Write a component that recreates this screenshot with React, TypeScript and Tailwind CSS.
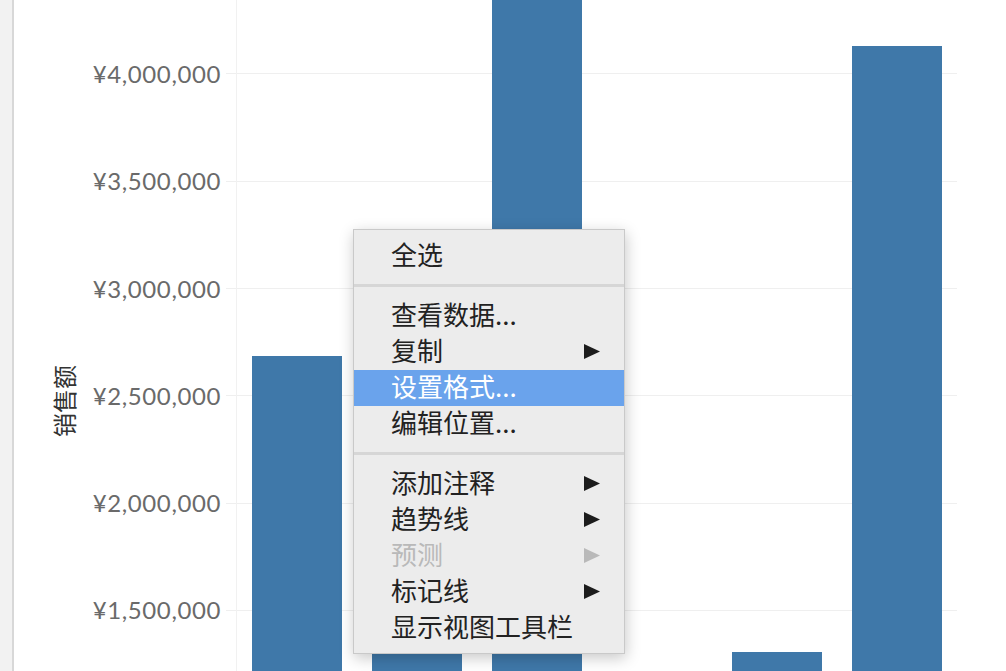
import type { CSSProperties } from 'react'

const axisTicks = ['¥4,000,000', '¥3,500,000', '¥3,000,000', '¥2,500,000', '¥2,000,000', '¥1,500,000']

// offsets (px) of each bar's top edge from the top of the pane; null = no mark
const barTops: (number | null)[] = [356, 520, -40, null, 652, 46]

type MenuItem =
  | { kind: 'sep' }
  | { kind: 'item'; label: string; submenu?: boolean; disabled?: boolean; active?: boolean }

const menu: MenuItem[] = [
  { kind: 'item', label: '全选' },
  { kind: 'sep' },
  { kind: 'item', label: '查看数据...' },
  { kind: 'item', label: '复制', submenu: true },
  { kind: 'item', label: '设置格式...', active: true },
  { kind: 'item', label: '编辑位置...' },
  { kind: 'sep' },
  { kind: 'item', label: '添加注释', submenu: true },
  { kind: 'item', label: '趋势线', submenu: true },
  { kind: 'item', label: '预测', submenu: true, disabled: true },
  { kind: 'item', label: '标记线', submenu: true },
  { kind: 'item', label: '显示视图工具栏' },
]

const cjk: CSSProperties = {
  fontFamily: '"Noto Sans CJK SC", "Noto Sans", sans-serif',
}

function SubmenuArrow({ color }: { color: string }) {
  return (
    <svg width="16" height="15" viewBox="0 0 16 15" className="mt-[4px] shrink-0">
      <path d="M0 0 L16 7.5 L0 15 Z" fill={color} />
    </svg>
  )
}

function ContextMenu() {
  return (
    <div
      className="absolute left-[353px] top-[229px] w-[272px] border border-[#c9c9c9] bg-[#ececec] pt-[8px] pb-[7px] shadow-[1px_4px_14px_rgba(0,0,0,0.22)]"
      style={cjk}
    >
      {menu.map((m, i) =>
        m.kind === 'sep' ? (
          <div key={i} className="mt-[10px] mb-[11px] h-[3px] bg-[#d6d6d6]" />
        ) : (
          <div
            key={i}
            className={
              'flex h-[36px] items-center justify-between pb-[5px] pl-[37px] pr-[24px] text-[26px] leading-[31px] ' +
              (m.active ? 'bg-[#6aa3ec] text-white' : m.disabled ? 'text-[#b9b9b9]' : 'text-[#222]')
            }
          >
            <span>{m.label}</span>
            {m.submenu && <SubmenuArrow color={m.disabled ? '#b9b9b9' : '#1c1c1c'} />}
          </div>
        )
      )}
    </div>
  )
}

export default function App() {
  return (
    <div className="relative flex h-[671px] w-[1006px] overflow-hidden bg-white">
      {/* side gutter */}
      <div className="w-[14px] shrink-0 border-r-2 border-[#d8d8d8] bg-[#f2f2f2]" />

      {/* axis title */}
      <div className="flex w-[72px] shrink-0 flex-col pl-[28px] pt-[365px]">
        <div className="flex h-[72px] items-center justify-center">
          <span
            className="-rotate-90 whitespace-nowrap text-[24px] leading-none text-[#333]"
            style={cjk}
          >
            销售额
          </span>
        </div>
      </div>

      {/* tick labels */}
      <div className="flex w-[150px] shrink-0 flex-col pt-[20.35px]">
        {axisTicks.map((t) => (
          <div key={t} className="flex h-[107.3px] items-center justify-end">
            <span
              className="text-[24px] leading-none tracking-[0.6px] text-[#6a6a6a]"
              style={{ fontFamily: 'Lato, "Open Sans", sans-serif' }}
            >
              {t}
            </span>
            <span className="ml-[5px] h-px w-[10px] bg-[#efefef]" />
          </div>
        ))}
      </div>

      {/* plot area */}
      <div className="relative flex-1 border-l border-[#f1f1f1]">
        <div className="flex w-[720px] flex-col pt-[20.35px]">
          {axisTicks.map((t) => (
            <div key={t} className="flex h-[107.3px] items-center">
              <div className="h-px w-full bg-[#efefef]" />
            </div>
          ))}
        </div>

        <div className="absolute inset-0 flex items-stretch gap-[30px] pl-[15px]">
          {barTops.map((top, i) =>
            top === null ? (
              <div key={i} className="w-[90px]" />
            ) : (
              <div key={i} className="w-[90px] bg-[#3f78a9]" style={{ marginTop: top }} />
            )
          )}
        </div>
      </div>

      <ContextMenu />
    </div>
  )
}
